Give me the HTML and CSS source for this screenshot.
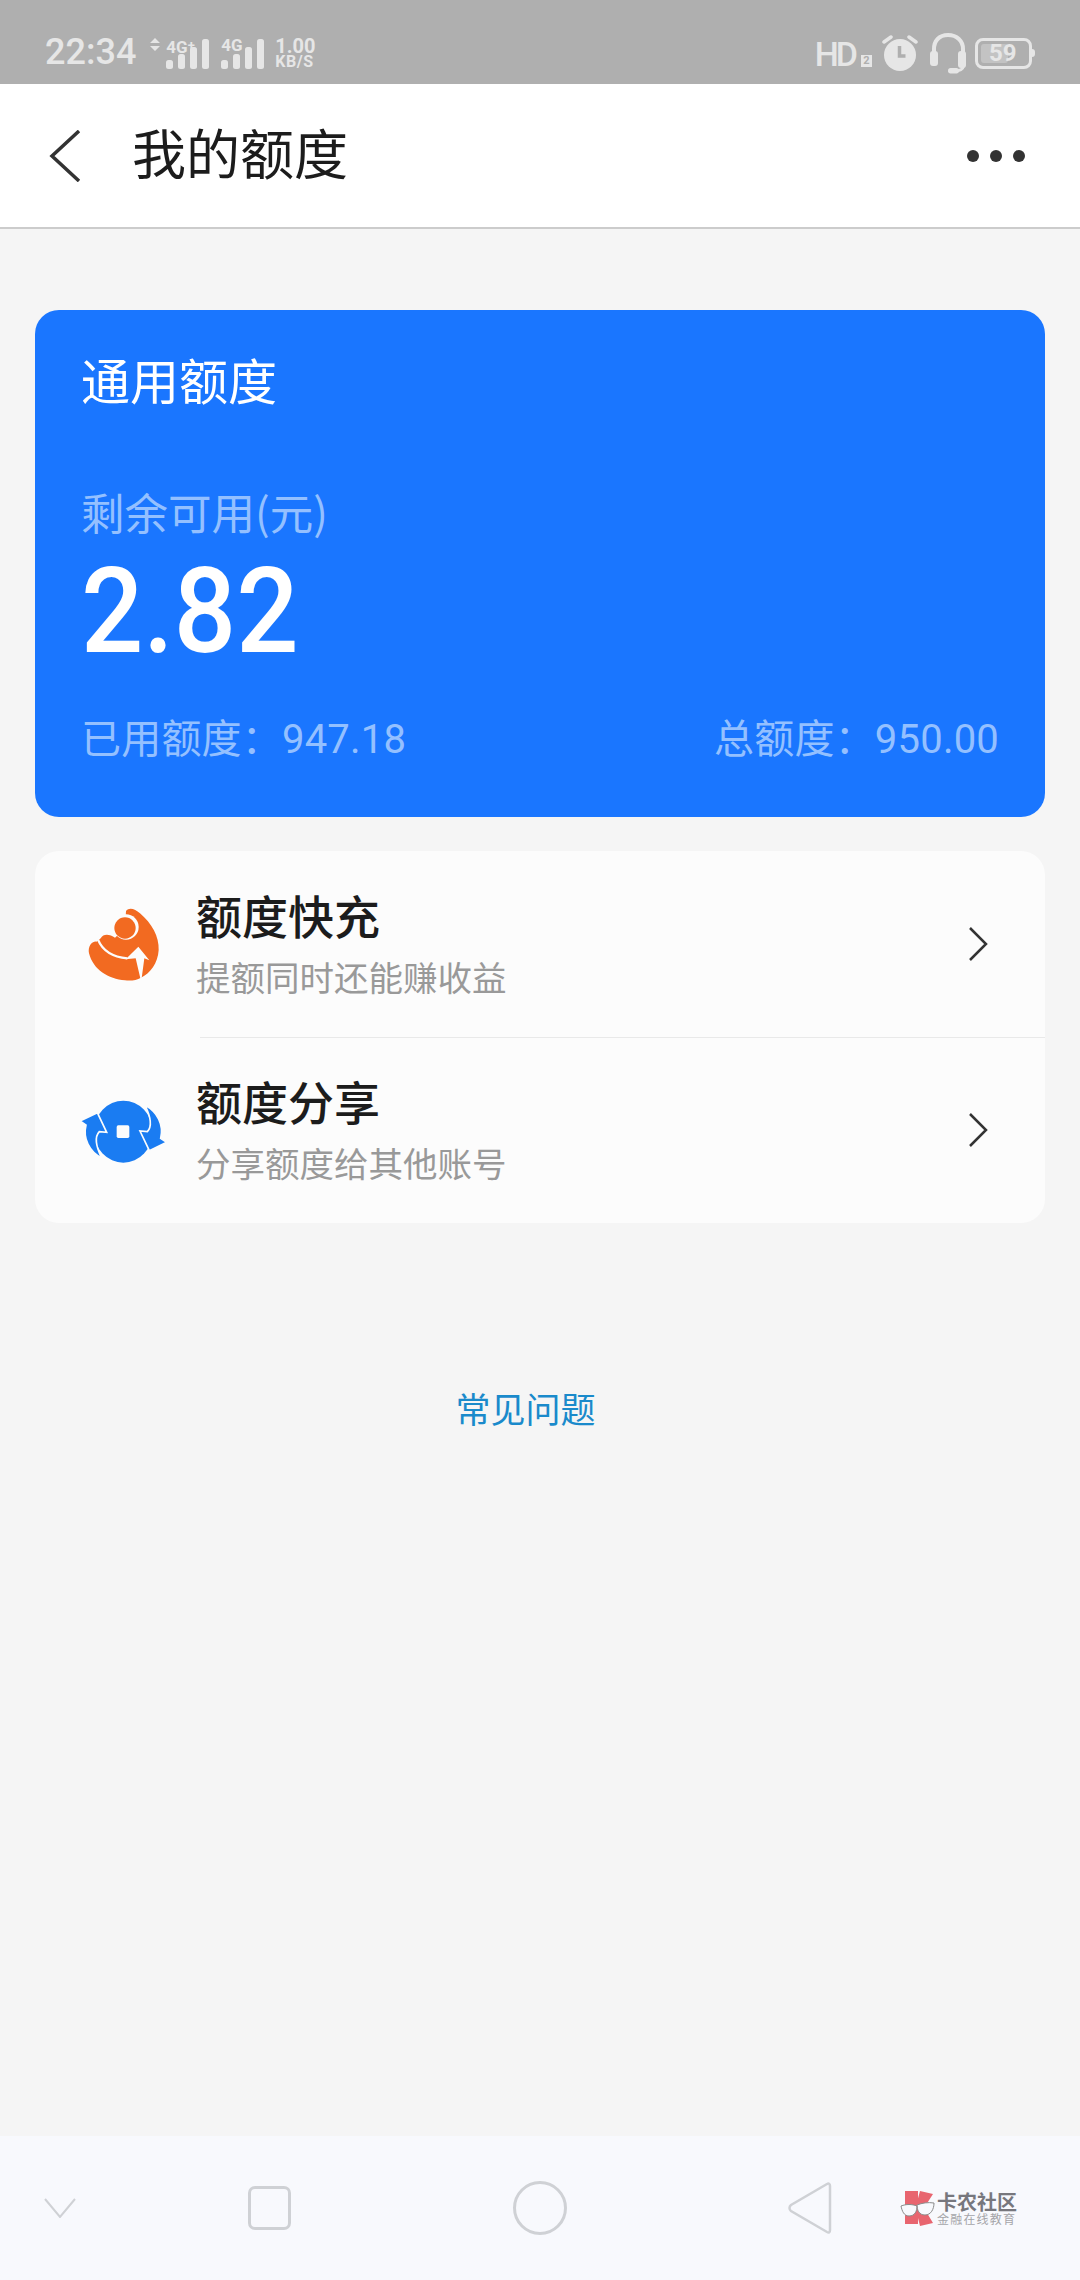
FILE: index.html
```html
<!DOCTYPE html>
<html lang="zh-CN">

<head>
    <meta charset="UTF-8">
    <title>我的额度</title>
    <link rel="stylesheet" href="styles.css">
</head>

<body>
    <div class="status-bar">
        <div class="status-left">
            <span class="clock">22:34</span>
            <svg class="sim-arrows" width="10" height="13" viewBox="0 0 10 13">
                <path d="M5 0l5 5H0zM5 13l5-5H0z" fill="#e6e6e6"/>
            </svg>
            <div class="signal signal-first">
                <span class="net">4G<i>+</i></span>
                <svg width="43" height="30" viewBox="0 0 43 30" class="bars">
                    <rect x="0" y="21" width="7" height="9" rx="2.500"/>
                    <rect x="12" y="15" width="7" height="15" rx="2.500"/>
                    <rect x="24" y="8" width="7" height="22" rx="2.500"/>
                    <rect x="36" y="0" width="7" height="30" rx="2.500"/>
                </svg>
            </div>
            <div class="signal">
                <span class="net">4G</span>
                <svg width="43" height="30" viewBox="0 0 43 30" class="bars">
                    <rect x="0" y="21" width="7" height="9" rx="2.500"/>
                    <rect x="12" y="15" width="7" height="15" rx="2.500"/>
                    <rect x="24" y="8" width="7" height="22" rx="2.500"/>
                    <rect x="36" y="0" width="7" height="30" rx="2.500"/>
                </svg>
            </div>
            <div class="speed">
                <span class="speed-num">1.00</span>
                <span class="speed-unit">KB/S</span>
            </div>
        </div>
        <div class="status-right">
            <span class="hd">HD</span>
            <span class="hd-sub">2</span>
            <svg class="alarm" width="36" height="37" viewBox="0 0 36 37">
                <circle cx="18" cy="21" r="16" fill="#e6e6e6"/>
                <path d="M2 8l7-5M34 8l-7-5" stroke="#e6e6e6" stroke-width="3.500" stroke-linecap="round" fill="none"/>
                <path d="M17.500 12v10h6" stroke="#afafaf" stroke-width="3.500" fill="none"/>
            </svg>
            <svg class="headset" width="36" height="41" viewBox="0 0 36 41">
                <path d="M4 21V16C4 8 9 2 18 2s15 6 15 14v5" stroke="#e6e6e6" stroke-width="4" fill="none"/>
                <rect x="0" y="18" width="8" height="15" rx="3" fill="#e6e6e6"/>
                <rect x="28" y="18" width="8" height="17" rx="3" fill="#e6e6e6"/>
                <path d="M33 34c0 2-3 4-8 4" stroke="#e6e6e6" stroke-width="3" fill="none"/>
                <rect x="18" y="35" width="11" height="5.500" rx="2.700" fill="#e6e6e6"/>
            </svg>
            <div class="battery">
                <div class="battery-level"></div>
                <span class="battery-num">59</span>
            </div>
            <span class="battery-tip"></span>
        </div>
    </div>

    <div class="header">
        <svg class="back" width="32" height="52" viewBox="0 0 32 52">
            <path d="M30 1L3 26l27 25" stroke="#333" stroke-width="3.500" fill="none"/>
        </svg>
        <h1 class="page-title">我的额度</h1>
        <div class="more"><span></span><span></span><span></span></div>
    </div>

    <div class="content">
        <div class="quota-card">
            <div class="quota-title">通用额度</div>
            <div class="quota-label">剩余可用(元)</div>
            <div class="quota-value">2.82</div>
            <div class="quota-foot">
                <span>已用额度：947.18</span>
                <span>总额度：950.00</span>
            </div>
        </div>

        <div class="menu-card">
            <div class="menu-row">
                <!-- orange figure with up arrow -->
                <svg class="menu-icon icon-charge" width="100" height="100" viewBox="0 0 300 300">
                    <path d="M168 48C178 36 195 42 210 55C245 85 268 125 266 165C264 205 240 235 213 248C200 255 185 258 165 256C115 252 70 225 57 175C53 155 65 138 80 140L92 130C100 115 120 118 135 128L165 100z" fill="#f26a21"/>
                    <path d="M84 134C98 168 125 186 172 190" stroke="#fcfcfc" stroke-width="7" fill="none"/>
                    <path d="M205 155L238 196L223 190L215 250L211 250L197 190L167 193z" fill="#fcfcfc"/>
                    <circle cx="168" cy="96" r="38" fill="#fcfcfc"/>
                    <circle cx="165" cy="99" r="32" fill="#f26a21"/>
                </svg>
                <div class="menu-text">
                    <div class="menu-title">额度快充</div>
                    <div class="menu-sub">提额同时还能赚收益</div>
                </div>
                <svg class="chevron" width="20" height="34" viewBox="0 0 20 34">
                    <path d="M2 1l16 16L2 33" stroke="#333" stroke-width="2.500" fill="none"/>
                </svg>
            </div>
            <div class="menu-row menu-row-second">
                <!-- blue coin with two arrows -->
                <svg class="menu-icon icon-share" width="130" height="110" viewBox="0 0 390 330">
                    <ellipse cx="190" cy="185" rx="88" ry="93" fill="#1a7cf2"/>
                    <rect x="170" y="166" width="38" height="38" rx="5" fill="#fcfcfc"/>
                    <path d="M60 153L112 128L140 187L118 185C104 200 108 230 125 264C88 245 68 205 78 165z" fill="#1a7cf2" stroke="#fcfcfc" stroke-width="5"/>
                    <path d="M60 153L112 128L140 187L118 185C104 200 108 230 125 264C88 245 68 205 78 165z" fill="#1a7cf2" stroke="#fcfcfc" stroke-width="5" transform="rotate(180 190 185)"/>
                </svg>
                <div class="menu-text">
                    <div class="menu-title">额度分享</div>
                    <div class="menu-sub">分享额度给其他账号</div>
                </div>
                <svg class="chevron" width="20" height="34" viewBox="0 0 20 34">
                    <path d="M2 1l16 16L2 33" stroke="#333" stroke-width="2.500" fill="none"/>
                </svg>
            </div>
        </div>

        <div class="faq">常见问题</div>
    </div>

    <div class="nav-bar">
        <svg class="nav-down" width="32" height="20" viewBox="0 0 32 20">
            <path d="M1 1l15 18L31 1" stroke="#cfd1d5" stroke-width="2" fill="none"/>
        </svg>
        <div class="nav-square"></div>
        <div class="nav-circle"></div>
        <svg class="nav-back" width="44" height="52" viewBox="0 0 44 52">
            <path d="M39 2L3 23c-2 1.500-2 4.500 0 6l36 21c2 1 3 0 3-2V4c0-2-1-3-3-2z" stroke="#cfd1d5" stroke-width="2.500" fill="none"/>
        </svg>
        <div class="logo">
            <svg width="35" height="36" viewBox="0 0 35 36">
                <path d="M5 1h13v33H5zM20 1l13 3-9 14 9 15-13 3-3-12v-12z" fill="#e8656f"/>
                <path d="M1 16c5-2 11-2 16 0 0 5-2 10-8 10-5 0-7-5-8-10zM17 15c5-2 11-3 17-2 0 6-3 12-9 12s-8-5-8-10z" fill="#f8f9fd" stroke="#8a8a8a" stroke-width="1"/>
            </svg>
            <div class="logo-text">
                <span class="logo-name">卡农社区</span>
                <span class="logo-slogan">金融在线教育</span>
            </div>
        </div>
    </div>
</body>

</html>
```

FILE: styles.css
```css
* {
    box-sizing: border-box;
}

html, body {
    margin: 0;
    height: 100%;
}

body {
    width: 1080px;
    height: 2280px;
    display: flex;
    flex-direction: column;
    background-color: #f5f5f5;
    font-family: "Noto Sans CJK SC", Roboto, sans-serif;
    overflow: hidden;
}

/* status bar */
.status-bar {
    height: 84px;
    flex: none;
    display: flex;
    justify-content: space-between;
    align-items: flex-end;
    padding: 0 45px 15px 45px;
    background-color: #afafaf;
    color: #e6e6e6;
    font-family: Roboto, sans-serif;
}

.status-left, .status-right {
    display: flex;
    align-items: flex-end;
}

.clock {
    font-size: 36px;
    line-height: 34px;
    font-weight: 500;
}

.sim-arrows {
    margin: 0 0 18px 14px;
}

.signal {
    position: relative;
    width: 43px;
    height: 30px;
    margin-left: 12px;
}

.signal-first {
    margin-left: 6px;
}

.bars {
    display: block;
    fill: #e6e6e6;
}

.net {
    position: absolute;
    left: 0;
    top: -2px;
    font-size: 17px;
    line-height: 17px;
    font-weight: 700;
}

.net i {
    font-style: normal;
    font-size: 13px;
    vertical-align: 3px;
}

.speed {
    display: flex;
    flex-direction: column;
    margin-left: 11px;
    font-weight: 700;
}

.speed-num {
    font-size: 20px;
    line-height: 18px;
}

.speed-unit {
    font-size: 16px;
    line-height: 14px;
    letter-spacing: 0.500px;
}

.hd {
    font-size: 34px;
    line-height: 30px;
    font-weight: 500;
    letter-spacing: -3px;
    margin-right: 6px;
}

.hd-sub {
    width: 11px;
    height: 12px;
    margin-bottom: 2px;
    background-color: #e6e6e6;
    color: #afafaf;
    font-size: 11px;
    line-height: 12px;
    font-weight: 700;
    text-align: center;
}

.alarm {
    margin: 0 0 -2px 10px;
}

.headset {
    margin: 0 0 -5px 12px;
}

.battery {
    position: relative;
    width: 57px;
    height: 31px;
    margin-left: 9px;
    border: 3px solid #e6e6e6;
    border-radius: 8px;
}

.battery-level {
    position: absolute;
    left: 3px;
    top: 3px;
    bottom: 3px;
    width: 27px;
    border-radius: 3px;
    background-color: #c3c3c3;
}

.battery-num {
    position: absolute;
    left: 11px;
    top: 0;
    font-size: 24px;
    line-height: 24px;
    font-weight: 700;
}

.battery-tip {
    width: 3px;
    height: 8px;
    margin-bottom: 12px;
    background-color: #e6e6e6;
    border-radius: 0 3px 3px 0;
}

/* header */
.header {
    height: 145px;
    flex: none;
    display: flex;
    align-items: center;
    padding: 0 55px 0 49px;
    background-color: #fff;
    border-bottom: 2px solid #cccccc;
}

.page-title {
    margin: -8px 0 0 51px;
    font-size: 54px;
    line-height: 70px;
    font-weight: 400;
    color: #1c1c1c;
}

.more {
    display: flex;
    gap: 11px;
    margin-left: auto;
    margin-top: 1px;
}

.more span {
    width: 12px;
    height: 12px;
    border-radius: 50%;
    background-color: #333;
}

/* main content */
.content {
    flex: 1;
    padding: 81px 35px 0;
}

.quota-card {
    height: 507px;
    padding: 36px 46px 0;
    background-color: #1a76ff;
    border-radius: 24px;
    color: #fff;
}

.quota-title {
    font-size: 49px;
    line-height: 66px;
}

.quota-label {
    margin-top: 70px;
    font-size: 43.500px;
    line-height: 60px;
    color: #94c0ff;
}

/* the digits in the screenshot are narrower than Roboto */
.quota-value {
    margin-top: 11px;
    font-family: Roboto, sans-serif;
    font-size: 118px;
    line-height: 118px;
    font-weight: 500;
    transform: scaleX(0.93);
    transform-origin: left center;
}

.quota-foot {
    display: flex;
    justify-content: space-between;
    margin-top: 41px;
    font-size: 40px;
    line-height: 56px;
    letter-spacing: 0.200px;
    color: #94c0ff;
    font-family: Roboto, "Noto Sans CJK SC", sans-serif;
}

.menu-card {
    margin-top: 34px;
    height: 372px;
    background-color: #fcfcfc;
    border-radius: 24px;
}

.menu-row {
    position: relative;
    height: 186px;
    display: flex;
    align-items: center;
    padding-right: 57px;
}

.menu-row-second::before {
    content: "";
    position: absolute;
    left: 165px;
    right: 0;
    top: 0;
    height: 1px;
    background-color: #e9e9e9;
}

.menu-icon {
    flex: none;
}

.icon-charge {
    margin: 2px 26px 0 35px;
}

.icon-share {
    margin: -10px 6px 0 25px;
}

.menu-text {
    margin-top: -7px;
}

.menu-title {
    font-size: 46px;
    line-height: 62px;
    font-weight: 500;
    color: #1c1c1c;
}

.menu-sub {
    margin-top: 8px;
    font-size: 34.500px;
    line-height: 46px;
    color: #999;
}

.chevron {
    margin-left: auto;
}

.faq {
    margin-top: 161px;
    margin-right: 29px;
    text-align: center;
    font-size: 35px;
    line-height: 48px;
    color: #1a8acb;
}

/* bottom nav */
.nav-bar {
    height: 144px;
    flex: none;
    display: flex;
    align-items: center;
    padding: 0 0 0 44px;
    background-color: #f8f9fd;
}

.nav-square {
    width: 43px;
    height: 44px;
    margin-left: 172px;
    border: 3px solid #cfd1d5;
    border-radius: 7px;
}

.nav-circle {
    width: 54px;
    height: 54px;
    margin-left: 222px;
    border: 3px solid #cfd1d5;
    border-radius: 50%;
}

.nav-back {
    margin-left: 221px;
}

.logo {
    display: flex;
    align-items: center;
    gap: 2px;
    margin-left: 68px;
}

.logo-text {
    display: flex;
    flex-direction: column;
    white-space: nowrap;
}

.logo-name {
    font-size: 20px;
    line-height: 21px;
    font-weight: 700;
    color: #77777d;
}

.logo-slogan {
    font-size: 12px;
    line-height: 14px;
    letter-spacing: 1.200px;
    color: #a5a5a9;
}
```
